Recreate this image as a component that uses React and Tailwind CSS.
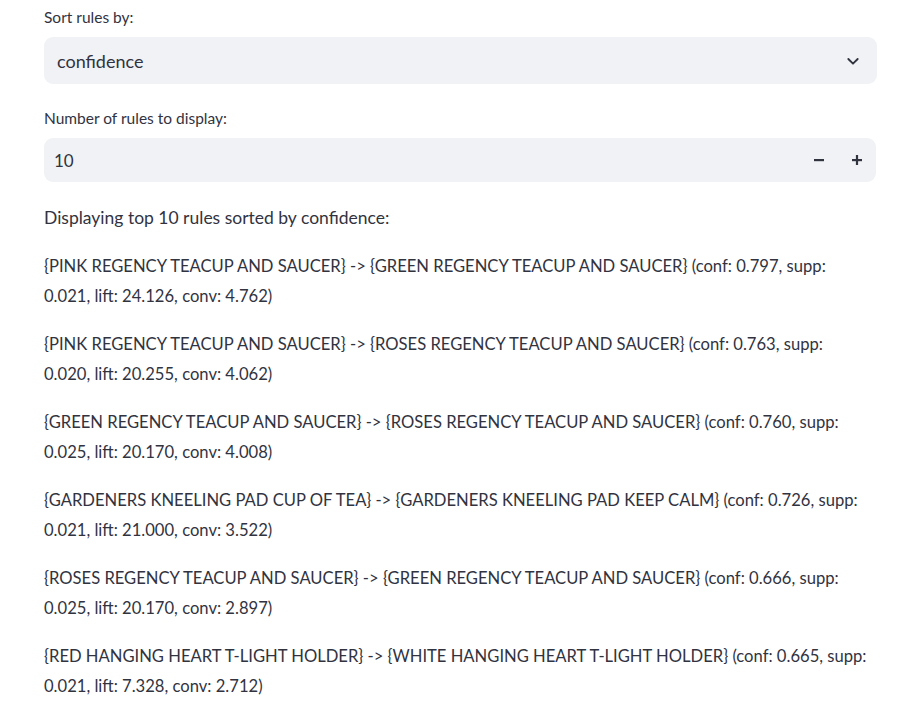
import React from "react";

const rules = [
  "{PINK REGENCY TEACUP AND SAUCER} -> {GREEN REGENCY TEACUP AND SAUCER} (conf: 0.797, supp: 0.021, lift: 24.126, conv: 4.762)",
  "{PINK REGENCY TEACUP AND SAUCER} -> {ROSES REGENCY TEACUP AND SAUCER} (conf: 0.763, supp: 0.020, lift: 20.255, conv: 4.062)",
  "{GREEN REGENCY TEACUP AND SAUCER} -> {ROSES REGENCY TEACUP AND SAUCER} (conf: 0.760, supp: 0.025, lift: 20.170, conv: 4.008)",
  "{GARDENERS KNEELING PAD CUP OF TEA} -> {GARDENERS KNEELING PAD KEEP CALM} (conf: 0.726, supp: 0.021, lift: 21.000, conv: 3.522)",
  "{ROSES REGENCY TEACUP AND SAUCER} -> {GREEN REGENCY TEACUP AND SAUCER} (conf: 0.666, supp: 0.025, lift: 20.170, conv: 2.897)",
  "{RED HANGING HEART T-LIGHT HOLDER} -> {WHITE HANGING HEART T-LIGHT HOLDER} (conf: 0.665, supp: 0.021, lift: 7.328, conv: 2.712)",
];

export default function App() {
  return (
    <div
      className="w-[904px] h-[724px] overflow-hidden bg-white text-[#31333f]"
      style={{ fontFamily: "Lato, 'Noto Sans', sans-serif" }}
    >
      <div className="ml-[44px] w-[833px] pt-[5px] flex flex-col">
        <div className="h-[32px] text-[15.5px] leading-[24px]">Sort rules by:</div>
        <div className="h-[47px] rounded-[9px] bg-[#f0f2f6] flex items-center justify-between pl-[13px] pr-[16px] text-[18px]">
          <span className="pt-[1px]">confidence</span>
          <svg width="16" height="16" viewBox="0 0 24 24" fill="none" stroke="#31333f" strokeWidth="2.8" strokeLinecap="round" strokeLinejoin="round">
            <path d="M5 9l7 7 7-7" />
          </svg>
        </div>
        <div className="mt-[22px] h-[32px] text-[15.5px] leading-[24px]">Number of rules to display:</div>
        <div className="h-[44px] w-[832px] rounded-[9px] bg-[#f0f2f6] flex items-center justify-between pl-[10px] text-[17px]">
          <span className="pt-[1px]">10</span>
          <div className="flex items-center h-full">
            <div className="w-[38px] h-full flex items-center justify-center">
              <svg width="14" height="14" viewBox="0 0 14 14"><rect x="2" y="6" width="10" height="2.2" fill="#31333f" /></svg>
            </div>
            <div className="w-[38px] h-full flex items-center justify-center">
              <svg width="14" height="14" viewBox="0 0 14 14"><rect x="2" y="6" width="10" height="2.2" fill="#31333f" /><rect x="5.9" y="2" width="2.2" height="10" fill="#31333f" /></svg>
            </div>
          </div>
        </div>
        <div className="w-[826px] flex flex-col">
          <p className="mt-[21px] text-[17.5px] leading-[30px]">Displaying top 10 rules sorted by confidence:</p>
          {rules.map((r, i) => (
            <p key={i} className="mt-[18px] text-[16.6px] leading-[30px]">{r}</p>
          ))}
        </div>
      </div>
    </div>
  );
}
